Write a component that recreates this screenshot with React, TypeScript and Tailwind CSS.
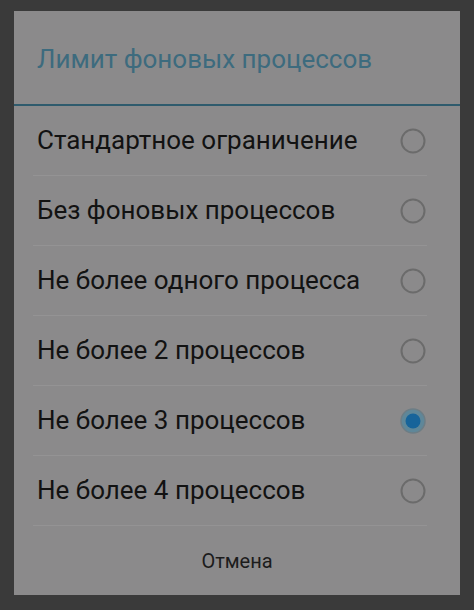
const OPTIONS = [
  "Стандартное ограничение",
  "Без фоновых процессов",
  "Не более одного процесса",
  "Не более 2 процессов",
  "Не более 3 процессов",
  "Не более 4 процессов",
];

const SELECTED = 4;

function Radio({ checked }: { checked: boolean }) {
  if (checked) {
    return (
      <svg width="28" height="28" viewBox="0 0 28 28">
        <circle cx="14" cy="14" r="12" fill="#5f8799" stroke="#6d7d85" strokeWidth="1.5" />
        <circle cx="14" cy="14" r="7.5" fill="#17649a" />
      </svg>
    );
  }
  return (
    <svg width="28" height="28" viewBox="0 0 28 28">
      <circle cx="14" cy="14" r="11.5" fill="none" stroke="#6b6b6b" strokeWidth="2" />
    </svg>
  );
}

export default function App() {
  return (
    <div
      className="h-[610px] w-[474px] overflow-hidden bg-[#3a3a3a] pt-[11px] pl-[14px]"
      style={{ fontFamily: "Roboto, 'Noto Sans', sans-serif" }}
    >
      <div className="flex w-[446px] flex-col bg-[#8b8a8b]">
        <div className="flex h-[93px] items-center pl-[23px] pt-[4px]">
          <span className="text-[26px] text-[#3d6b7e]">Лимит фоновых процессов</span>
        </div>
        <div className="h-[2px] bg-[#2f5b6d]" />
        {OPTIONS.map((label, i) => (
          <div key={label} className="flex h-[70px] flex-col pl-[19px] pr-[33px]">
            <div className="flex flex-1 items-center justify-between pl-[4px]">
              <span className="text-[26px] text-[#121212]">{label}</span>
              <Radio checked={i === SELECTED} />
            </div>
            <div className="h-px bg-[#949394]" />
          </div>
        ))}
        <div className="flex h-[69px] items-center justify-center">
          <span className="text-[20px] text-[#1c1c1c]">Отмена</span>
        </div>
      </div>
    </div>
  );
}
